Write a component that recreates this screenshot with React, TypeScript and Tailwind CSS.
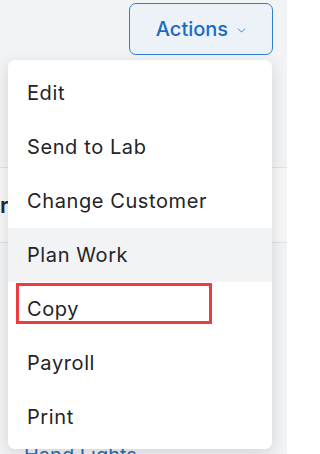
import { ChevronDown } from "lucide-react";

const items = ["Edit", "Send to Lab", "Change Customer", "Plan Work", "Copy", "Payroll", "Print"];

export default function App() {
  return (
    <div className="relative h-[454px] w-[287px] overflow-hidden bg-[#f2f3f5] font-['Inter',sans-serif]">
      {/* page behind the menu */}
      <div className="flex h-[60px] justify-end pr-[14px] pt-[3px]">
        <button className="flex h-[52px] w-[144px] items-center justify-center gap-[7px] rounded-[7px] border border-[#2f7fd3] bg-[#edf2f8] pl-[2px] text-[20px] font-medium text-[#1a6cc3]">
          Actions
          <ChevronDown className="mt-[3px] h-[13px] w-[13px]" strokeWidth={1.5} />
        </button>
      </div>
      <div className="h-[107px]" />
      <div className="flex h-[76px] items-center border-y border-[#dfe1e4] bg-[#f6f6f7]">
        <span className="text-[22px] font-semibold leading-none text-[#1b2b45]">r</span>
      </div>
      <div className="h-[202px]" />
      <div className="pl-[24px] text-[20px] leading-[20px] text-[#2a6bb5]">Hand Lights</div>

      {/* dropdown menu */}
      <div className="absolute left-[8px] top-[60px] w-[264px] rounded-[7px] bg-white pb-[5px] pt-[6px] shadow-[0_4px_16px_rgba(0,0,0,0.13)]">
        {items.map((label) => (
          <div
            key={label}
            className={`relative flex h-[54px] items-center pl-[19px] text-[20px] tracking-[0.6px] text-[#232427] ${label === "Plan Work" ? "bg-[#f1f3f5]" : ""}`}
          >
            {label}
            {label === "Copy" && (
              <div className="absolute left-[8px] top-[1px] h-[41px] w-[196px] border-[3.5px] border-[#ec3b43]" />
            )}
          </div>
        ))}
      </div>
    </div>
  );
}
